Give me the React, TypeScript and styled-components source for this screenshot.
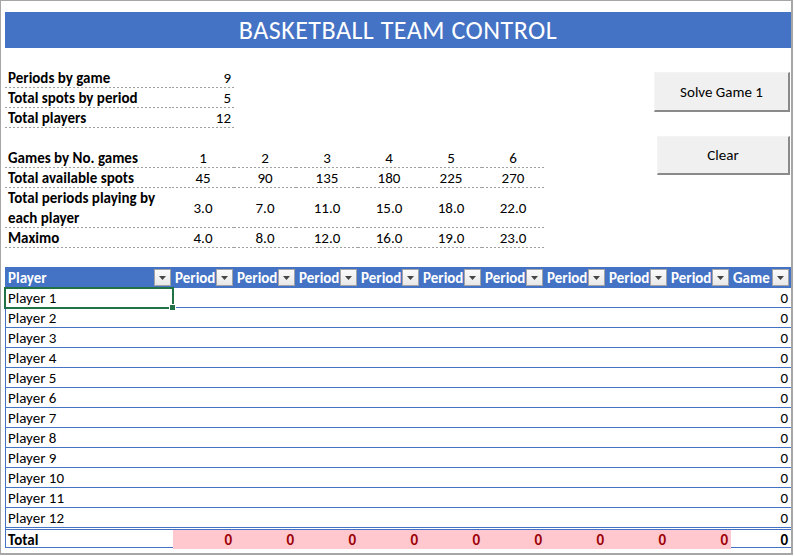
import React from 'react';
import styled, { createGlobalStyle } from 'styled-components';

const GlobalStyle = createGlobalStyle`
  body {
    margin: 0;
    background: #ffffff;
    font-family: Calibri, Carlito, Lato, 'Liberation Sans', sans-serif;
    font-size: 15px;
    color: #000000;
  }
`;

const BLUE = '#4472c4';

// numbers shown in the "games" summary
const gameCols = [1, 2, 3, 4, 5, 6];
const spots = [45, 90, 135, 180, 225, 270];
const periodsEach = ['3.0', '7.0', '11.0', '15.0', '18.0', '22.0'];
const maximo = ['4.0', '8.0', '12.0', '16.0', '19.0', '23.0'];

const players = Array.from({ length: 12 }, (_, i) => `Player ${i + 1}`);
const headers = ['Player', ...Array(9).fill('Period'), 'Game 1'];

const Frame = styled.div`
  box-sizing: border-box;
  width: 793px;
  height: 555px;
  border-top: 1px solid #a6a6a6;
  border-left: 1px solid #a6a6a6;
  border-right: 2px solid #a6a6a6;
  border-bottom: 2px solid #a6a6a6;
  padding: 11px 0 0 4px;
  overflow: hidden;
`;

const Banner = styled.div`
  height: 36px;
  background: ${BLUE};
  color: #ffffff;
  display: flex;
  align-items: center;
  justify-content: center;
  font-size: 26px;
  letter-spacing: 0.5px;
`;

const Upper = styled.div`
  display: flex;
`;

const InfoColumn = styled.div`
  display: flex;
  flex-direction: column;
`;

const ActionColumn = styled.div`
  margin-left: auto;
  width: 137px;
  padding-top: 24px;
  display: flex;
  flex-direction: column;
  gap: 24px;
`;

const ActionButton = styled.button<{ $shift?: number; $h: number }>`
  box-sizing: border-box;
  height: ${({ $h }) => $h}px;
  margin-left: ${({ $shift }) => $shift ?? 0}px;
  width: ${({ $shift }) => 136 - ($shift ?? 0)}px;
  background: #f0f0f0;
  border: none;
  border-top: 1px solid #f4f4f4;
  border-left: 1px solid #f4f4f4;
  border-right: 2px solid #8a8a8a;
  border-bottom: 2px solid #8a8a8a;
  font-family: inherit;
  font-size: 15px;
  color: #000000;
  padding: 0;
`;

const KeyGrid = styled.div`
  margin-top: 20px;
  display: grid;
  grid-template-columns: 167px 62px;
`;

const GamesGrid = styled.div`
  margin-top: 20px;
  display: grid;
  grid-template-columns: 167px repeat(6, 62px);
`;

const InfoCell = styled.div<{ $align?: 'left' | 'right' | 'center'; $bold?: boolean; $tall?: boolean }>`
  box-sizing: border-box;
  height: ${({ $tall }) => ($tall ? 40 : 20)}px;
  display: flex;
  align-items: center;
  justify-content: ${({ $align }) =>
    $align === 'right' ? 'flex-end' : $align === 'center' ? 'center' : 'flex-start'};
  padding: 0 3px;
  font-weight: ${({ $bold }) => ($bold ? 700 : 400)};
  line-height: 20px;
  white-space: ${({ $tall }) => ($tall ? 'normal' : 'nowrap')};
  background-image: linear-gradient(to right, #a0a0a0 50%, transparent 50%);
  background-size: 4px 1px;
  background-position: left bottom;
  background-repeat: repeat-x;
`;

const Sheet = styled.div`
  margin-top: 19px;
  width: 786px;
`;

const SheetRow = styled.div<{ $head?: boolean; $total?: boolean; $last?: boolean }>`
  box-sizing: border-box;
  display: grid;
  grid-template-columns: 167px repeat(9, 62px) 1fr;
  height: ${({ $head, $total, $last }) => ($head || $total ? 21 : $last ? 19 : 20)}px;
  background: ${({ $head }) => ($head ? BLUE : '#ffffff')};
  border-left: 1px solid ${BLUE};
  border-bottom: ${({ $head, $last }) => ($head || $last ? 'none' : `1px solid ${BLUE}`)};
  border-top: ${({ $total }) => ($total ? `3px double ${BLUE}` : 'none')};
`;

const HeadCell = styled.div`
  display: flex;
  align-items: center;
  min-width: 0;
  padding-left: 2px;
  padding-right: 2px;
  padding-top: 1px;
  color: #ffffff;
  font-weight: 700;
`;

const HeadLabel = styled.span`
  flex: 1;
  min-width: 0;
  overflow: hidden;
  white-space: nowrap;
`;

const FilterButton = styled.span`
  box-sizing: border-box;
  flex: none;
  width: 17px;
  height: 17px;
  margin-top: -1px;
  background: linear-gradient(#fbfbfb, #e8e8e8);
  border: 1px solid #a3a3a3;
  display: flex;
  align-items: center;
  justify-content: center;
`;

const BodyCell = styled.div<{ $align?: 'left' | 'right'; $bold?: boolean; $warn?: boolean }>`
  position: relative;
  min-width: 0;
  display: flex;
  align-items: center;
  justify-content: ${({ $align }) => ($align === 'right' ? 'flex-end' : 'flex-start')};
  padding: 1px 3px 0 2px;
  line-height: 18px;
  white-space: nowrap;
  font-weight: ${({ $bold }) => ($bold ? 700 : 400)};
  background: ${({ $warn }) => ($warn ? '#ffc7ce' : 'transparent')};
  color: ${({ $warn }) => ($warn ? '#9c0006' : '#000000')};
`;

// active-cell outline with its fill handle
const Selection = styled.div`
  position: absolute;
  left: -2px;
  top: -1px;
  right: -1px;
  bottom: -2px;
  border: 2px solid #217346;
  pointer-events: none;

  &::after {
    content: '';
    position: absolute;
    right: -4px;
    bottom: -4px;
    width: 5px;
    height: 5px;
    background: #217346;
    border: 1px solid #ffffff;
  }
`;

const Arrow = () => (
  <svg width="7" height="4" viewBox="0 0 7 4">
    <polygon points="0,0 7,0 3.5,4" fill="#454545" />
  </svg>
);

export default function App() {
  return (
    <Frame>
      <GlobalStyle />
      <Banner>BASKETBALL TEAM CONTROL</Banner>

      <Upper>
        <InfoColumn>
          <KeyGrid>
            <InfoCell $bold>Periods by game</InfoCell>
            <InfoCell $align="right">9</InfoCell>
            <InfoCell $bold>Total spots by period</InfoCell>
            <InfoCell $align="right">5</InfoCell>
            <InfoCell $bold>Total players</InfoCell>
            <InfoCell $align="right">12</InfoCell>
          </KeyGrid>

          <GamesGrid>
            <InfoCell $bold>Games by No. games</InfoCell>
            {gameCols.map((g) => (
              <InfoCell key={`g${g}`} $align="center">{g}</InfoCell>
            ))}
            <InfoCell $bold>Total available spots</InfoCell>
            {spots.map((s) => (
              <InfoCell key={`s${s}`} $align="center">{s}</InfoCell>
            ))}
            <InfoCell $bold $tall>Total periods playing by each player</InfoCell>
            {periodsEach.map((p) => (
              <InfoCell key={`p${p}`} $align="center" $tall>{p}</InfoCell>
            ))}
            <InfoCell $bold>Maximo</InfoCell>
            {maximo.map((m) => (
              <InfoCell key={`m${m}`} $align="center">{m}</InfoCell>
            ))}
          </GamesGrid>
        </InfoColumn>

        <ActionColumn>
          <ActionButton $h={40}>Solve Game 1</ActionButton>
          <ActionButton $h={39} $shift={3}>Clear</ActionButton>
        </ActionColumn>
      </Upper>

      <Sheet>
        <SheetRow $head>
          {headers.map((h, i) => (
            <HeadCell key={i}>
              <HeadLabel>{h}</HeadLabel>
              <FilterButton>
                <Arrow />
              </FilterButton>
            </HeadCell>
          ))}
        </SheetRow>

        {players.map((name, r) => (
          <SheetRow key={name} $last={r === players.length - 1}>
            <BodyCell>
              {name}
              {r === 0 && <Selection />}
            </BodyCell>
            {Array.from({ length: 9 }, (_, c) => (
              <BodyCell key={c} />
            ))}
            <BodyCell $align="right">0</BodyCell>
          </SheetRow>
        ))}

        <SheetRow $total>
          <BodyCell $bold>Total</BodyCell>
          {Array.from({ length: 9 }, (_, c) => (
            <BodyCell key={c} $align="right" $bold $warn>
              0
            </BodyCell>
          ))}
          <BodyCell $align="right" $bold>
            0
          </BodyCell>
        </SheetRow>
      </Sheet>
    </Frame>
  );
}
